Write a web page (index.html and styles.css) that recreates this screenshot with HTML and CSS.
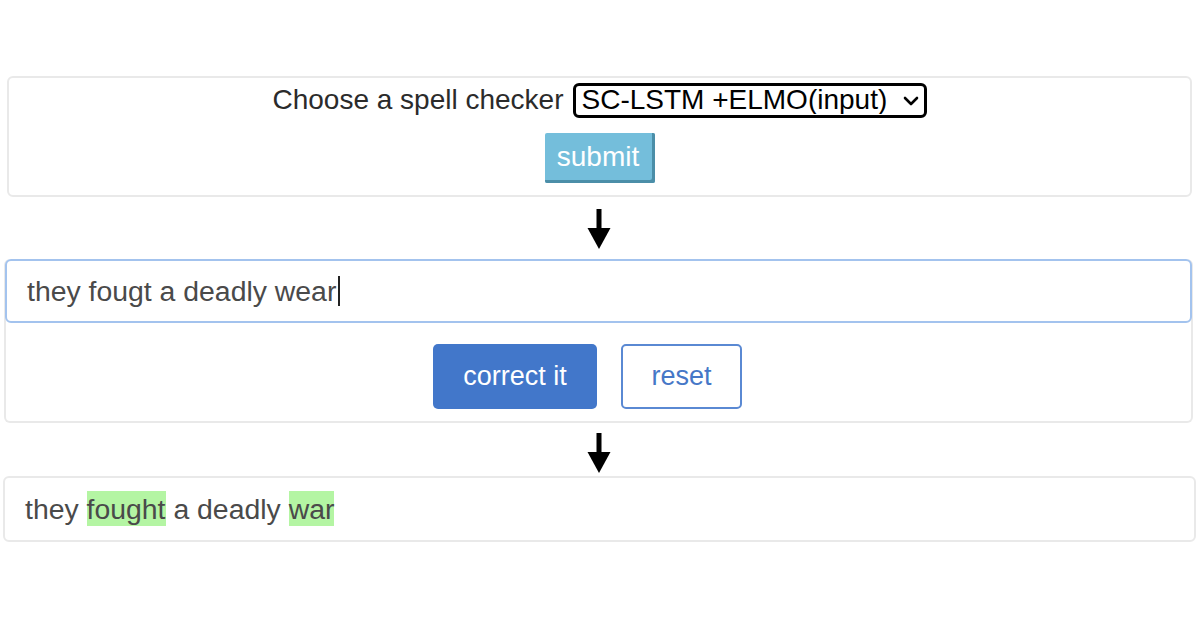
FILE: index.html
```html
<!DOCTYPE html>
<html>
<head>
<meta charset="utf-8">
<link rel="stylesheet" href="styles.css">
</head>
<body>
<div class="page">
  <div class="panel panel-choose">
    <div class="choose-row">
      <span class="label">Choose a spell checker</span>
      <span class="select-wrap">
        <select class="select"><option>SC-LSTM +ELMO(input)</option></select>
        <svg class="chev" width="16" height="10" viewBox="0 0 16 10"><path d="M2 2 L8 8 L14 2" fill="none" stroke="#000" stroke-width="2.6" stroke-linecap="round" stroke-linejoin="round"/></svg>
      </span>
    </div>
    <button class="btn-submit">submit</button>
  </div>

  <div class="arrow">
    <svg width="26" height="41" viewBox="0 0 26 41"><rect x="10.5" y="0" width="5" height="21" fill="#000"/><polygon points="1.5,19 24.5,19 13,40" fill="#000"/></svg>
  </div>

  <div class="panel panel-input">
    <div class="text-input">they fougt a deadly wear<span class="caret"></span></div>
    <div class="btn-row">
      <button class="btn-primary">correct it</button>
      <button class="btn-outline">reset</button>
    </div>
  </div>

  <div class="arrow arrow-2">
    <svg width="26" height="41" viewBox="0 0 26 41"><rect x="10.5" y="0" width="5" height="21" fill="#000"/><polygon points="1.5,19 24.5,19 13,40" fill="#000"/></svg>
  </div>

  <div class="panel panel-output">
    <span>they <span class="hl">fought</span> a deadly <span class="hl">war</span></span>
  </div>
</div>
</body>
</html>
```

FILE: styles.css
```css
html, body {
  margin: 0;
  padding: 0;
  background: #fff;
  width: 1200px;
  height: 630px;
  overflow: hidden;
}
body {
  font-family: "Liberation Sans", Arial, Helvetica, sans-serif;
  color: #333;
}
.page {
  display: flex;
  flex-direction: column;
  padding-top: 76px;
}
.panel {
  box-sizing: border-box;
  border: 2px solid #e9e9e9;
  border-radius: 6px;
  background: #fff;
}
.panel-choose {
  margin: 0 8px 0 7px;
  height: 121px;
  display: flex;
  flex-direction: column;
  align-items: center;
  padding-top: 5px;
}
.choose-row {
  display: flex;
  align-items: center;
  gap: 9px;
  height: 34px;
}
.label {
  font-size: 28px;
  color: #2b2b2b;
  line-height: 34px;
}
.select-wrap {
  position: relative;
  display: inline-block;
}
.select {
  -webkit-appearance: none;
  appearance: none;
  box-sizing: border-box;
  width: 354px;
  height: 35px;
  border: 3px solid #000;
  border-radius: 6px;
  background: #fff;
  font-family: "Liberation Sans", Arial, sans-serif;
  font-size: 28px;
  color: #000;
  padding: 0 0 0 6px;
  line-height: 28px;
}
.chev {
  position: absolute;
  right: 8px;
  top: 13px;
}
.btn-submit {
  margin-top: 16px;
  width: 110px;
  height: 50px;
  box-sizing: border-box;
  border: none;
  border-radius: 2px;
  background: #74bedb;
  box-shadow: inset -3px -3px 0 #4b8ea8;
  color: #fff;
  font-family: "Liberation Sans", Arial, sans-serif;
  font-size: 28px;
  padding: 0 3px 3px 0;
}
.arrow {
  display: flex;
  justify-content: center;
  height: 62px;
  align-items: flex-start;
  padding-top: 12px;
  box-sizing: border-box;
}
.arrow svg {
  margin-left: -3px;
}
.arrow-2 {
  height: 53px;
  padding-top: 10px;
}
.panel-input {
  margin: 0 7px 0 4px;
  height: 164px;
  border-top: none;
  border-radius: 6px;
  display: flex;
  flex-direction: column;
}
.text-input {
  box-sizing: border-box;
  margin: 0 -1px 0 -1px;
  height: 64px;
  border: 2px solid #a3c3ee;
  border-radius: 6px;
  padding: 0 20px;
  font-size: 28.4px;
  color: #4a4a4a;
  display: flex;
  align-items: center;
}
.caret {
  display: inline-block;
  width: 1.5px;
  height: 30px;
  background: #222;
  margin-left: 2px;
}
.btn-row {
  display: flex;
  justify-content: center;
  gap: 24px;
  margin-top: 21px;
  padding-right: 22px;
}
.btn-primary, .btn-outline {
  box-sizing: border-box;
  height: 65px;
  border-radius: 5px;
  font-family: "Liberation Sans", Arial, sans-serif;
  font-size: 27px;
}
.btn-primary {
  width: 164px;
  border: none;
  background: #4277ca;
  color: #fff;
}
.btn-outline {
  width: 121px;
  border: 2px solid #5a89d3;
  background: #fff;
  color: #4677c7;
}
.panel-output {
  margin: 0 4px 0 3px;
  height: 66px;
  display: flex;
  align-items: center;
  padding: 0 20px;
  font-size: 28.4px;
  color: #4a4a4a;
}
.hl {
  background: #b4f5a3;
  padding: 2px 0 1px;
}
```
